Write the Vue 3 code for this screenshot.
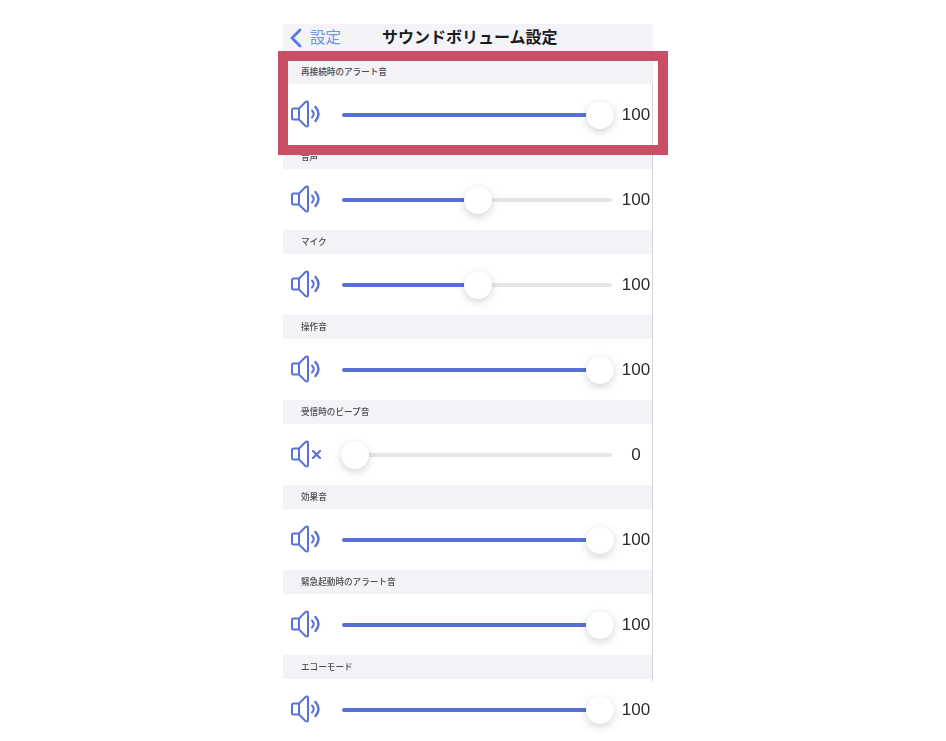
<script setup>
const rows = [
  { label: '再接続時のアラート音', pos: 258, value: 100 },
  { label: '音声', pos: 136, value: 100 },
  { label: 'マイク', pos: 136, value: 100 },
  { label: '操作音', pos: 258, value: 100 },
  { label: '受信時のビープ音', pos: 13, value: 0 },
  { label: '効果音', pos: 258, value: 100 },
  { label: '緊急起動時のアラート音', pos: 258, value: 100 },
  { label: 'エコーモード', pos: 258, value: 100 },
]
</script>

<template>
  <div class="page">
    <div class="phone">
      <header class="nav">
        <svg class="back" width="13" height="20" viewBox="0 0 13 20">
          <path d="M11 2 L3 10 L11 18" fill="none" stroke="#4f78ea" stroke-width="2.8" stroke-linecap="round" stroke-linejoin="round" />
        </svg>
        <span class="back-label">設定</span>
        <h1 class="title">サウンドボリューム設定</h1>
      </header>
      <section v-for="row in rows" :key="row.label" class="group">
        <div class="group-head">{{ row.label }}</div>
        <div class="group-row">
          <svg class="icon" width="31" height="28" viewBox="0 0 31 28">
            <path d="M2.500 8.500 H8 V19.500 H2.500 Q1 19.500 1 18 V10 Q1 8.500 2.500 8.500 Z M8 8.500 L14.500 2 Q17 0.500 17 3 V25 Q17 27.500 14.500 26 L8 19.500" fill="none" stroke="#5a72d6" stroke-width="2" stroke-linejoin="round" />
            <template v-if="row.value > 0">
              <path d="M21 10.500 Q24.500 14 21 17.500" fill="none" stroke="#5a72d6" stroke-width="2" stroke-linecap="round" />
              <path d="M24.500 7 Q30.500 14 24.500 21" fill="none" stroke="#5a72d6" stroke-width="2.400" stroke-linecap="round" />
            </template>
            <path v-else d="M22 11 L29 18 M29 11 L22 18" fill="none" stroke="#5a72d6" stroke-width="2.200" stroke-linecap="round" />
          </svg>
          <div class="slider">
            <div class="fill" :style="{ width: row.pos + 'px' }"></div>
            <div class="thumb" :style="{ left: row.pos + 'px' }"></div>
          </div>
          <span class="value">{{ row.value }}</span>
        </div>
      </section>
      <div class="edge"></div>
    </div>
    <div class="highlight"></div>
  </div>
</template>

<style scoped>
.page {
  position: relative;
  width: 946px;
  height: 741px;
  overflow: hidden;
  background: #fff;
  font-family: "Liberation Sans", "Noto Sans CJK JP", sans-serif;
}
.phone {
  position: relative;
  width: 370px;
  margin: 24px 0 0 283px;
  filter: blur(0.4px);
}
.nav {
  position: relative;
  display: flex;
  align-items: center;
  box-sizing: border-box;
  height: 36px;
  padding: 0 0 9px 6px;
  background: #f3f3f8;
}
.back-label {
  margin-left: 8px;
  font-size: 15.5px;
  line-height: 20px;
  color: #7391e8;
}
.title {
  position: absolute;
  left: 99px;
  top: 3px;
  margin: 0;
  font-size: 16px;
  line-height: 22px;
  font-weight: 700;
  color: #1c1c1e;
  white-space: nowrap;
}
.group-head {
  display: flex;
  align-items: center;
  box-sizing: border-box;
  height: 24px;
  padding: 0 0 2px 18px;
  background: #f2f2f7;
  font-size: 8.6px;
  font-weight: 500;
  color: #4c4c50;
}
.group-row {
  display: flex;
  align-items: center;
  height: 61px;
  padding-left: 8px;
  background: #fff;
}
.icon {
  flex: none;
  margin-top: -1px;
}
.slider {
  position: relative;
  flex: none;
  width: 270px;
  height: 4px;
  margin-left: 20px;
  border-radius: 2px;
  background: #e5e5e5;
}
.fill {
  height: 100%;
  border-radius: 2px;
  background: #5870d6;
}
.thumb {
  position: absolute;
  top: 2px;
  width: 28px;
  height: 28px;
  border-radius: 50%;
  background: #fff;
  transform: translate(-50%, -50%);
  box-shadow: 0 3px 8px rgba(0, 0, 0, 0.16), 0 0 1px rgba(0, 0, 0, 0.12);
}
.value {
  flex: none;
  width: 48px;
  font-size: 17px;
  text-align: center;
  color: #2b2b2b;
}
.edge {
  position: absolute;
  right: 0;
  top: 60px;
  width: 1px;
  height: 597px;
  background: #d4d4d8;
}
.highlight {
  position: absolute;
  left: 278px;
  top: 51px;
  box-sizing: border-box;
  width: 390px;
  height: 104px;
  border: 10px solid #c94f66;
}
</style>
